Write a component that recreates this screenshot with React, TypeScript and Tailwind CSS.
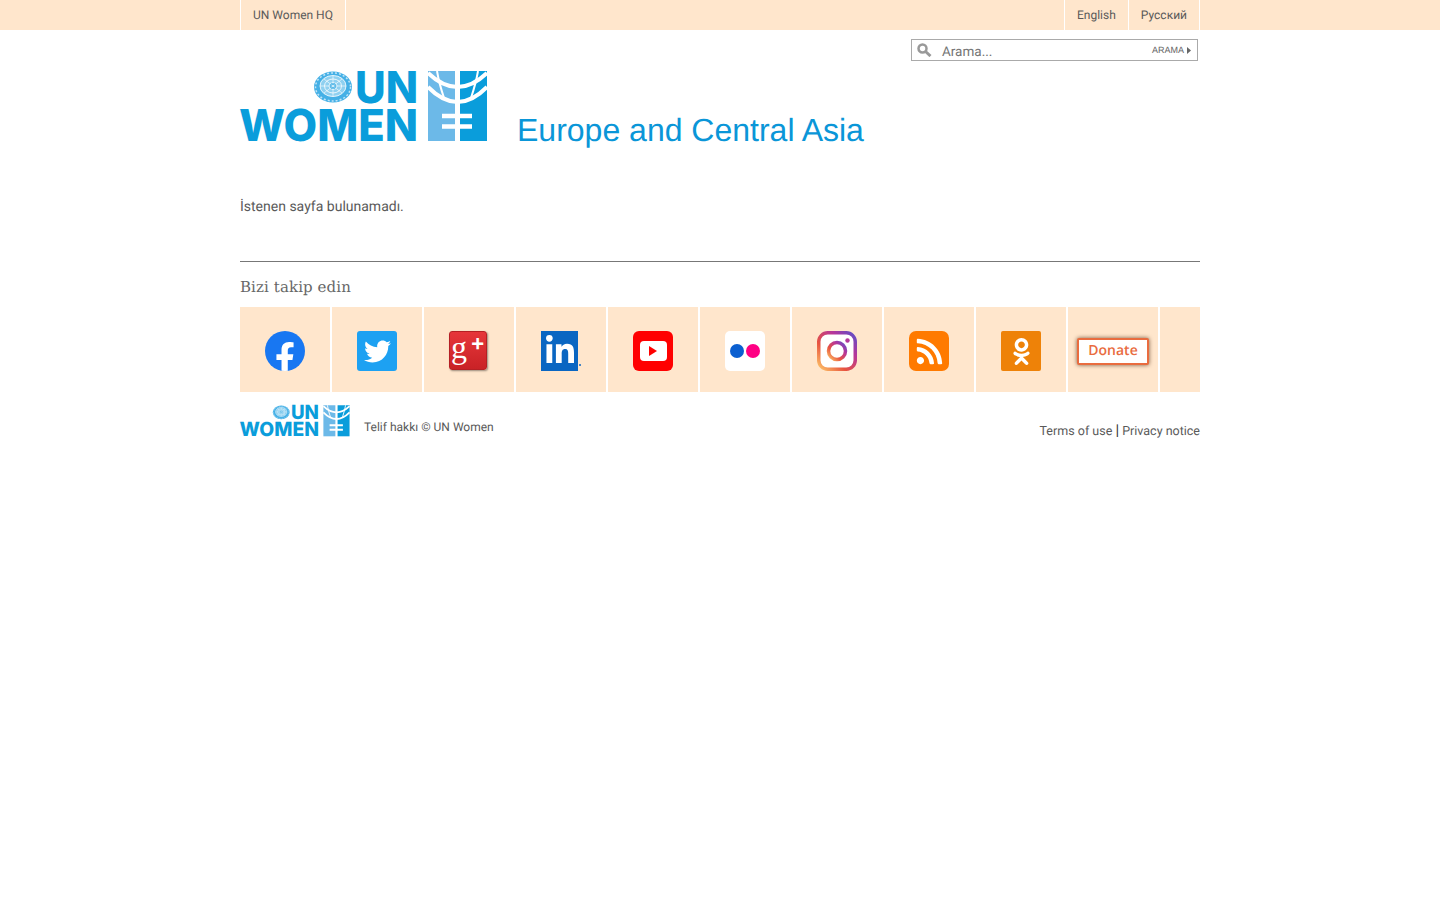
import { FaFacebookF, FaLinkedinIn, FaOdnoklassniki, FaRss, FaTwitter } from "react-icons/fa"

const roboto = "font-['Roboto',sans-serif] [text-rendering:geometricPrecision]"

function Logo({ className }: { className: string }) {
  return (
    <svg viewBox="0 0 248 71" className={`overflow-visible ${className}`}>
      {/* emblem */}
      <ellipse cx="93" cy="16" rx="19" ry="15.500" fill="#45b0e6" />
      <ellipse cx="93" cy="16" rx="17.500" ry="14" fill="none" stroke="#bfe4f7" strokeWidth="1.500" strokeDasharray="2 2" />
      <ellipse cx="93" cy="15" rx="13" ry="10.500" fill="#8fd0f0" stroke="#fff" strokeWidth="0.800" />
      <ellipse cx="93" cy="15" rx="8.500" ry="7" fill="none" stroke="#fff" strokeWidth="0.800" />
      <ellipse cx="93" cy="15" rx="4" ry="3.500" fill="#1c9fdf" stroke="#fff" strokeWidth="0.800" />
      <path d="M93 4.500v21M80 15h26M84 8l18 14M102 8L84 22" stroke="#fff" strokeWidth="0.600" />
      {/* wordmark */}
      <text x="115" y="32" fontSize="44" fontWeight="800" fill="#0a9ddb" textLength="63" lengthAdjust="spacingAndGlyphs" fontFamily="Inter, sans-serif">UN</text>
      <text x="-1" y="70" fontSize="44" fontWeight="800" fill="#0a9ddb" textLength="179" lengthAdjust="spacingAndGlyphs" fontFamily="Inter, sans-serif">WOMEN</text>
      {/* symbol */}
      <rect x="188" y="0" width="27" height="70" fill="#6cb9e8" />
      <rect x="220" y="0" width="27" height="70" fill="#0a9ddb" />
      <path d="M188 2Q217.500 30 247 2M188 16Q217.500 46 247 16" fill="none" stroke="#fff" strokeWidth="4" />
      <path d="M197 0Q199 12 204 27M238 0Q236 12 231 27" fill="none" stroke="#fff" strokeWidth="2" />
      <path d="M202 45h30M202 55.500h30" stroke="#fff" strokeWidth="4.500" />
    </svg>
  )
}

function Tile({ children }: { children: React.ReactNode }) {
  return <div className="w-[90px] h-[85px] bg-[#ffe6cc] flex items-start justify-center pt-6 shrink-0">{children}</div>
}

export default function App() {
  return (
    <div className={`min-h-screen bg-white text-[#5a5a5a] ${roboto}`}>
      <div className="h-[30px] bg-[#ffe6cc]">
        <div className="w-[960px] mx-auto h-full flex justify-between text-[12px]">
          <div className="flex border-l border-white">
            <a className="px-3 h-[30px] leading-[30px] border-r border-white">UN Women HQ</a>
          </div>
          <div className="flex border-l border-white">
            <a className="px-3 h-[30px] leading-[30px] border-r border-white">English</a>
            <a className="px-3 h-[30px] leading-[30px] border-r border-white">Русский</a>
          </div>
        </div>
      </div>

      <div className="w-[960px] mx-auto">
        <div className="flex justify-end pr-[2px] pt-[9px]">
          <div className="w-[287px] h-[22px] border border-[#aaa] flex items-center pl-[5px] pr-[6px]">
            <svg width="15" height="14" viewBox="0 0 15 14" fill="none" stroke="#999" className="shrink-0">
              <circle cx="5.500" cy="5.500" r="4" strokeWidth="2.500" />
              <path d="M8.500 8.500L13.500 13" strokeWidth="3" />
            </svg>
            <span className="ml-[10px] mt-[3px] text-[13.500px] leading-[16px] text-[#757575]">Arama...</span>
            <span className="ml-auto mt-[2px] text-[9px] text-[#666] font-['Liberation_Sans',sans-serif]">ARAMA</span>
            <svg width="4" height="7" viewBox="0 0 4 7" className="ml-[3px]">
              <path d="M0 0l4 3.500L0 7z" fill="#666" />
            </svg>
          </div>
        </div>

        <div className="flex items-start pt-[10px] h-[100px]">
          <Logo className="w-[248px] h-[71px] shrink-0" />
          <h1 className="ml-[29px] mt-[39px] text-[32px] leading-[40px] text-[#0a96d8] font-['Liberation_Sans',sans-serif]">
            Europe and Central Asia
          </h1>
        </div>

        <p className="mt-[35px] text-[14px] leading-[22px]">İstenen sayfa bulunamadı.</p>

        <div className="mt-[43px] border-t border-[#777]" />
        <h2 className="mt-[14px] text-[15px] tracking-[0.1px] leading-[22px] text-[#666] font-['DejaVu_Serif',serif]">Bizi takip edin</h2>

        <div className="mt-[9px] flex gap-[2px]">
          <Tile>
            <div className="w-10 h-10 rounded-full bg-[#1877f2] flex items-end justify-center overflow-hidden">
              <FaFacebookF className="text-white text-[32px] translate-y-[3px]" />
            </div>
          </Tile>
          <Tile>
            <div className="w-10 h-10 rounded-[3px] bg-[#1da1f2] flex items-center justify-center">
              <FaTwitter className="text-white text-[27px]" />
            </div>
          </Tile>
          <Tile>
            <div className="relative w-[38px] h-[39px] mr-[2px] rounded-[3px] bg-gradient-to-b from-[#e6363a] to-[#c92226] border border-[#b52024] shadow-[1px_1px_2px_#9a8a7a] text-white">
              <span className="absolute left-[1px] top-0 text-[32px] leading-[30px] font-['Liberation_Serif',serif]">g</span>
              <span className="absolute right-[2px] top-0 text-[22px] leading-[24px] font-bold font-['Liberation_Sans',sans-serif]">+</span>
            </div>
          </Tile>
          <Tile>
            <div className="relative w-[37px] h-10 mr-[3px] bg-[#0a66c2] flex items-center justify-center">
              <FaLinkedinIn className="text-white text-[32px]" />
              <div className="absolute right-[-3px] bottom-[5px] w-[2px] h-[2px] rounded-full bg-[#0a66c2]" />
            </div>
          </Tile>
          <Tile>
            <div className="w-10 h-10 rounded-[6px] bg-[#ff0000] flex items-center justify-center">
              <div className="w-[27px] h-[20px] rounded-[4px] bg-white flex items-center justify-center">
                <div className="w-0 h-0 border-y-[5px] border-y-transparent border-l-[8px] border-l-[#ff0000]" />
              </div>
            </div>
          </Tile>
          <Tile>
            <div className="w-10 h-10 rounded-[5px] bg-white flex items-center justify-center gap-[2px]">
              <div className="w-[14px] h-[14px] rounded-full bg-[#0b5fd0]" />
              <div className="w-[14px] h-[14px] rounded-full bg-[#ff0084]" />
            </div>
          </Tile>
          <Tile>
            <svg width="40" height="40" viewBox="0 0 40 40">
              <defs>
                <linearGradient id="ig" x1="0" y1="1" x2="1" y2="0">
                  <stop offset="0" stopColor="#fdc468" />
                  <stop offset="0.35" stopColor="#e8543f" />
                  <stop offset="0.7" stopColor="#b5359b" />
                  <stop offset="1" stopColor="#5b4fc9" />
                </linearGradient>
              </defs>
              <rect x="1.750" y="1.750" width="36.500" height="36.500" rx="9" fill="#fff" stroke="url(#ig)" strokeWidth="3.500" />
              <circle cx="20" cy="20" r="8.500" fill="none" stroke="url(#ig)" strokeWidth="3.500" />
              <circle cx="30.500" cy="9.500" r="2.200" fill="#b5359b" />
            </svg>
          </Tile>
          <Tile>
            <div className="w-10 h-10 rounded-[7px] bg-[#ff7a00] flex items-center justify-center">
              <FaRss className="text-white text-[29px]" />
            </div>
          </Tile>
          <Tile>
            <div className="w-10 h-10 rounded-[2px] bg-[#ee8208] flex items-center justify-center">
              <FaOdnoklassniki className="text-white text-[27px]" />
            </div>
          </Tile>
          <Tile>
            <div className="w-[72px] h-[27px] mt-[7px] pb-[2px] bg-white border-2 border-[#e96c3f] rounded-[2px] shadow-[0_0_4px_#7a5a40] flex items-center justify-center text-[14px] font-semibold text-[#e96c3f] font-['Open_Sans',sans-serif]">
              Donate
            </div>
          </Tile>
          <div className="flex-1 h-[85px] bg-[#ffe6cc]" />
        </div>

        <div className="mt-[13px] flex items-start">
          <Logo className="w-[110px] h-[32px] shrink-0" />
          <span className="ml-[14px] mt-[13px] text-[12px] leading-[18px]">Telif hakkı © UN Women</span>
          <div className="ml-auto mt-[18px] text-[12.500px] leading-[18px]">
            Terms of use <span className="text-[15px] leading-[15px] text-[#333]">|</span> Privacy notice
          </div>
        </div>
      </div>
    </div>
  )
}
